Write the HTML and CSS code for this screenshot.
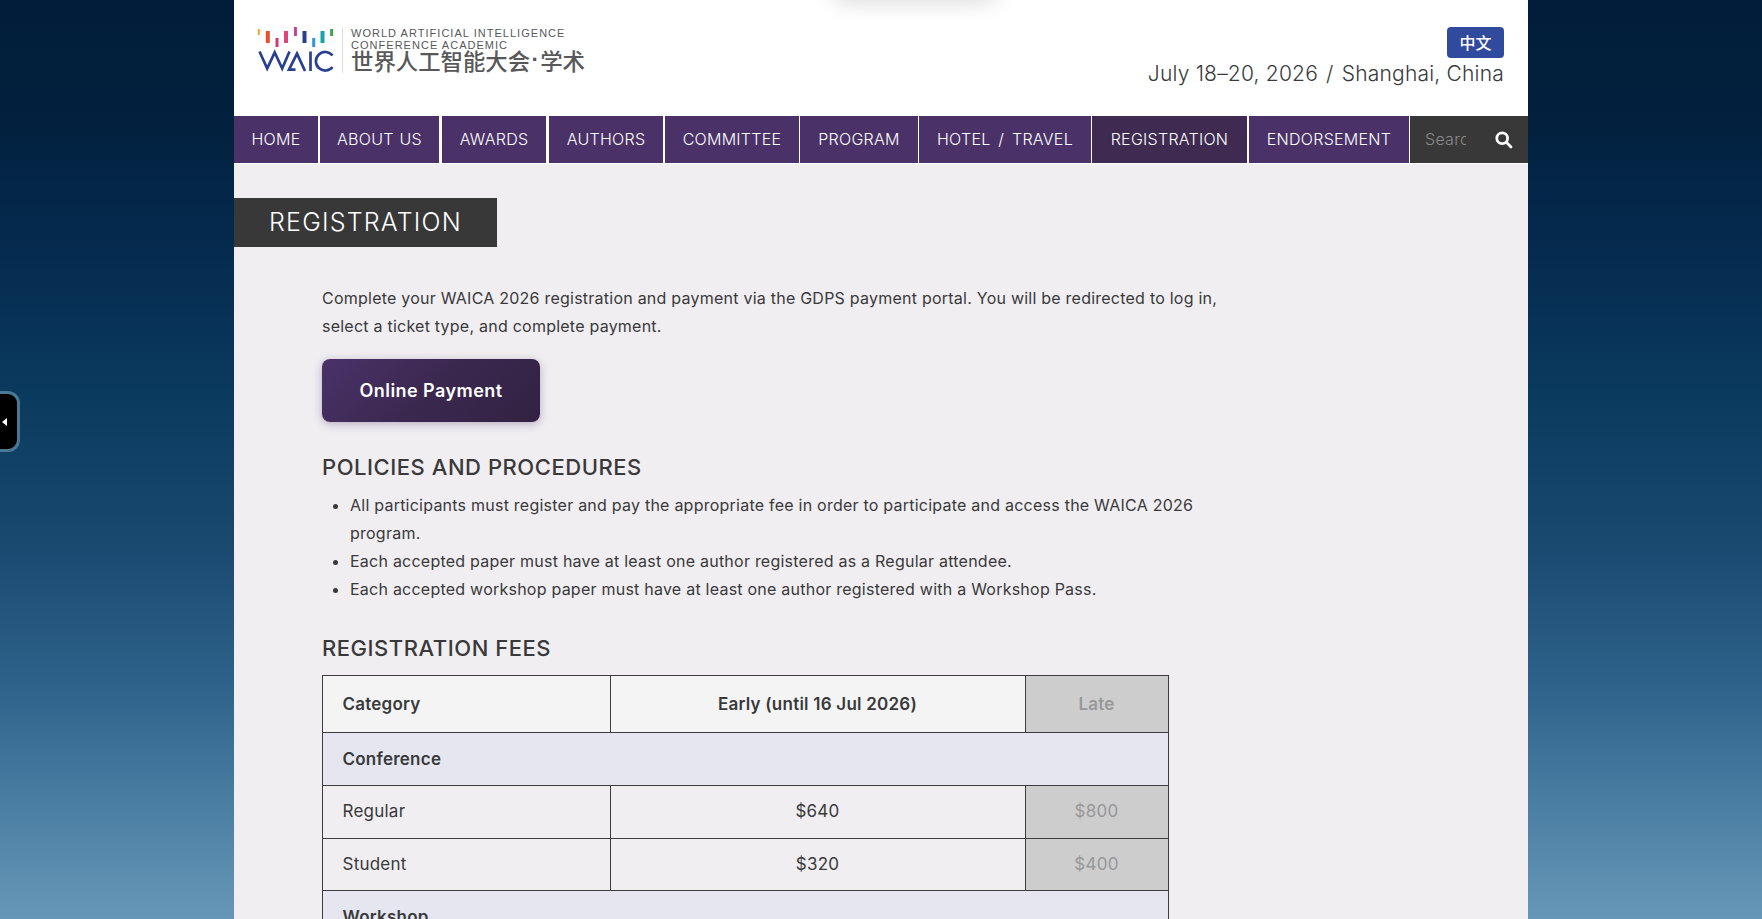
FILE: index.html
```
<!doctype html>
<html lang="en">
<head>
<meta charset="utf-8">
<title>Registration - WAICA 2026</title>
<link rel="stylesheet" href="styles.css">
</head>

<body>
<div class="topShadow"></div>
<div class="sideTab"><i></i></div>

<div class="main">
	<div class="header">
		<div class="logo">
			<svg class="logoMark" width="78" height="46" viewBox="0 0 78 46">
				<g fill="none">
					<path d="M1.800 2v6" stroke="#f0a62c" stroke-width="2"/>
					<path d="M10.800 4v12" stroke="#e8502c" stroke-width="4"/>
					<path d="M20 11v9" stroke="#d8366f" stroke-width="3"/>
					<path d="M29 4v12" stroke="#e0437c" stroke-width="4"/>
					<path d="M38.400 0v9" stroke="#c0478f" stroke-width="3"/>
					<path d="M47.500 4v12" stroke="#27408f" stroke-width="4"/>
					<path d="M56.700 11v9" stroke="#2f97d4" stroke-width="3"/>
					<path d="M65.500 4v12" stroke="#17a3a8" stroke-width="4"/>
					<path d="M74.600 2v7" stroke="#3fa648" stroke-width="3"/>
				</g>
				<g stroke="#27408f" stroke-width="2.700" fill="none">
					<path d="M2.500 24.500l7.700 17 7.500-16 7.500 16 7.300-17"/>
					<path d="M38.500 42.600h-6.500l8-16 8 17.400"/>
					<path d="M53.500 24.500V44"/>
					<path d="M75.500 28.500a9.300 9.300 0 1 0 0 11.500"/>
				</g>
			</svg>
			<div class="logoText">
				<p class="en">WORLD ARTIFICIAL INTELLIGENCE</p>
				<p class="en">CONFERENCE ACADEMIC</p>
				<p class="cn">世界人工智能大会<b>·</b>学术</p>
			</div>
		</div>
		<div class="headRight">
			<a class="lang">中文</a>
			<p class="date">July 18–20, 2026 <span>/</span> Shanghai, China</p>
		</div>
	</div>

	<ul class="nav">
		<li class="n1">HOME</li>
		<li class="n2">ABOUT US</li>
		<li class="n3">AWARDS</li>
		<li class="n4">AUTHORS</li>
		<li class="n5">COMMITTEE</li>
		<li class="n6">PROGRAM</li>
		<li class="n7">HOTEL / TRAVEL</li>
		<li class="n8 ac">REGISTRATION</li>
		<li class="n9">ENDORSEMENT</li>
		<li class="search">
			<span>Search</span>
			<svg width="18" height="18" viewBox="0 0 18 18"><circle cx="7.200" cy="7.200" r="5.400"/><path d="M11.300 11.300l4.700 4.700"/></svg>
		</li>
	</ul>

	<h1 class="title">REGISTRATION</h1>

	<div class="content">
		<p class="intro">Complete your WAICA 2026 registration and payment via the GDPS payment portal. You will be redirected to log in,<br>select a ticket type, and complete payment.</p>
		<a class="pay">Online Payment</a>

		<h2>POLICIES AND PROCEDURES</h2>
		<ul class="policy">
			<li>All participants must register and pay the appropriate fee in order to participate and access the WAICA 2026<br>program.</li>
			<li>Each accepted paper must have at least one author registered as a Regular attendee.</li>
			<li>Each accepted workshop paper must have at least one author registered with a Workshop Pass.</li>
		</ul>

		<h2 class="feesTitle">REGISTRATION FEES</h2>
		<table class="fees">
			<tr class="head"><th class="c1">Category</th><th class="c2">Early (until 16 Jul 2026)</th><th class="late">Late</th></tr>
			<tr class="group"><td colspan="3">Conference</td></tr>
			<tr><td>Regular</td><td class="price">$640</td><td class="late">$800</td></tr>
			<tr><td>Student</td><td class="price">$320</td><td class="late">$400</td></tr>
			<tr class="group"><td colspan="3">Workshop</td></tr>
		</table>
	</div>
</div>

</body>
</html>
```
FILE: styles.css
```
*{ margin:0; padding:0; box-sizing:border-box}
html{ height:100%; overflow:hidden}
body{ height:100%; overflow:hidden; background:linear-gradient(#011d3a 0%,#02203d 12%,#052b50 28%,#0b3a5f 43%,#1b4a71 60%,#2f638b 75%,#4b7fa3 88%,#6797b8 100%); font-family:Inter,"Noto Sans CJK SC",sans-serif; color:#39393b}
ul{ list-style:none}

.topShadow{ position:absolute; top:-40px; left:836px; width:158px; height:36px; border-radius:10px; box-shadow:0 4px 22px 3px rgba(0,0,0,.14)}
.sideTab{ position:absolute; top:391px; left:-14px; width:34px; height:61px; background:#000; border:3px solid #4b7796; border-radius:12px; display:flex; align-items:center; padding-left:13px}
.sideTab i{ border:solid transparent; border-width:4px 5px 4px 0; border-right-color:#fff}

.main{ width:1294px; height:919px; margin-left:234px; background:#f0eef1; overflow:hidden}

.header{ height:116px; background:#fff; display:flex; justify-content:space-between; padding:27px 24px 0 23px}
.logo{ display:flex; height:46px}
.logoText{ margin-left:7px; padding-left:8px; border-left:1px solid #ddd; color:#58585a; white-space:nowrap}
.logoText .en{ font:500 11px/12px "Liberation Sans",Arial,sans-serif; letter-spacing:1.030px}
.logoText .cn{ display:flex; font:500 22.400px/22px "Noto Sans CJK SC",sans-serif; margin-top:-2px}
.logoText .cn b{ width:10px; font-family:"Liberation Sans",Arial,sans-serif; text-align:center}
.headRight{ text-align:right}
.lang{ display:block; width:57px; height:31px; margin-left:auto; border-radius:4px; background:#304a9e; color:#fff; font:500 16px/30px "Noto Sans CJK SC",sans-serif; text-align:center}
.date{ margin-top:1px; font-size:21px; line-height:30px; font-weight:300; letter-spacing:.200px; white-space:nowrap}
.date span{ margin:0 2px}

.nav{ display:flex; height:48px; padding-bottom:1px; background:#fff; color:#fff; font-size:16px; font-weight:300; line-height:47px; letter-spacing:.280px; word-spacing:1px; text-align:center; white-space:nowrap}
.nav li{ background:#4a3269; margin-right:2px; flex:none}
.nav .ac{ background:#3f2a52}
.n1{ width:84px}
.n2{ width:119px}
.nav .n2,.nav .n3{ margin-right:3px}
.n3{ width:104px}
.n4{ width:114px}
.n5{ width:134px}
.n6{ width:118px}
.n7{ width:172px}
.nav .n7{ word-spacing:3px}
.n8{ width:155px}
.n9{ width:160px}
.nav .n5,.nav .n6,.nav .n7,.nav .n9{ margin-right:1px}
.nav .search{ flex:1; margin-right:0; background:#383838; display:flex; align-items:center; padding:0 15px; justify-content:space-between}
.search span{ width:41px; overflow:hidden; color:#8b8b8b; text-align:left}
.search svg{ fill:none; stroke:#fff; stroke-width:2.800; stroke-linecap:round}

.title{ width:262.500px; height:49px; margin-top:34px; padding-left:35px; background:#383838; color:#fff; font-size:25px; line-height:49px; font-weight:300; letter-spacing:1.200px; white-space:nowrap}

.content{ padding:38px 0 0 88px; font-size:16px; letter-spacing:.235px}
.intro{ line-height:27.500px; white-space:nowrap}
.pay{ display:block; width:218px; height:63px; margin-top:19px; border-radius:8px; background:linear-gradient(135deg,#4a3269,#3b284f 50%,#332143); box-shadow:0 2px 8px rgba(74,50,105,.35); color:#fff; font-size:18px; font-weight:600; line-height:63px; letter-spacing:.450px; text-align:center}
.content h2{ margin-top:30px; font-size:22px; line-height:30px; font-weight:500; letter-spacing:.540px; white-space:nowrap}
.policy{ margin-top:10px; padding-left:28px; list-style:disc; white-space:nowrap}
.policy li{ line-height:27.600px; margin-bottom:.500px}
.content .feesTitle{ margin-top:30px}
.fees{ width:847px; margin:12px 0 0 -.500px; border-collapse:collapse; table-layout:fixed; font-size:17px}
.fees td,.fees th{ height:52.700px; border:1px solid #3d3d40; padding:0 20px 1px; text-align:left}
.fees th{ height:57px; background:#f4f4f4; font-weight:600}
.fees .c1{ width:288px}
.fees .c2{ width:415px; text-align:center}
.fees .price{ text-align:center}
.fees .late{ background:#cdcdcd; color:#98989a; text-align:center}
.fees .group td{ background:#e5e6ef; font-weight:600}
```
